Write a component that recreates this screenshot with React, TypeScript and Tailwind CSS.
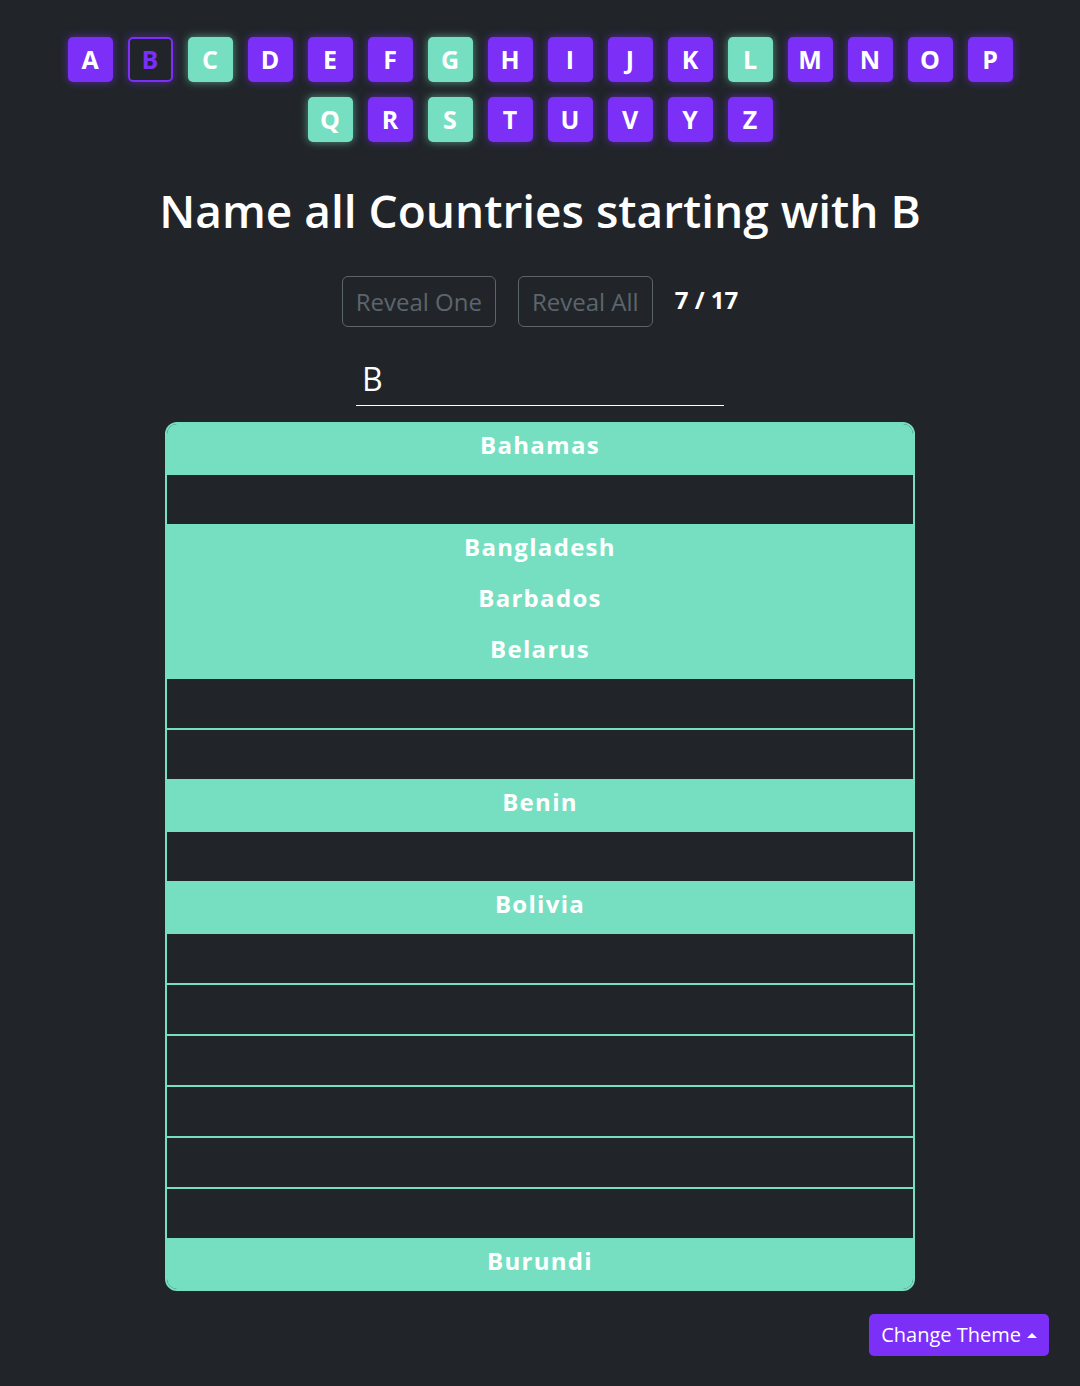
import { useState } from 'react'

const LETTERS = ['A', 'B', 'C', 'D', 'E', 'F', 'G', 'H', 'I', 'J', 'K', 'L', 'M', 'N', 'O', 'P', 'Q', 'R', 'S', 'T', 'U', 'V', 'Y', 'Z']
const DONE = ['C', 'G', 'L', 'Q', 'S']

const ROWS: (string | null)[] = [
  'Bahamas', null, 'Bangladesh', 'Barbados', 'Belarus', null, null, 'Benin', null, 'Bolivia',
  null, null, null, null, null, null, 'Burundi',
]

export default function App() {
  const [guess, setGuess] = useState('B')
  const current = 'B'
  const found = ROWS.filter(Boolean).length

  return (
    <div className="min-h-[1386px] bg-[#212529] text-white font-['Open_Sans','Noto_Sans',sans-serif]">
      {/* letter picker */}
      <div className="pt-[37px] mx-auto max-w-[960px] flex flex-wrap justify-center gap-[15px]">
        {LETTERS.map(l => {
          if (l === current) {
            return (
              <button key={l} className="w-[45px] h-[45px] rounded-[5px] border-2 border-[#7b2ff7] text-[#7b2ff7] text-[25px] font-bold leading-none shadow-[0_0_8px_rgba(123,47,247,0.55)]">
                {l}
              </button>
            )
          }
          const done = DONE.includes(l)
          return (
            <button
              key={l}
              className={`w-[45px] h-[45px] rounded-[5px] text-white text-[25px] font-bold leading-none ${done ? 'bg-[#77dfc1] shadow-[0_0_8px_rgba(119,223,193,0.6)]' : 'bg-[#7b2ff7] shadow-[0_0_8px_rgba(123,47,247,0.6)]'}`}
            >
              {l}
            </button>
          )
        })}
      </div>

      <h1 className="mt-[41px] text-center text-[46px] font-semibold leading-[1.2]">
        Name all Countries starting with {current}
      </h1>

      <div className="mt-[38px] flex justify-center items-start gap-[22px]">
        <button disabled className="h-[51px] px-[13px] rounded-[6px] border border-[#6c757d] text-[#6c757d] text-[24px] opacity-80">
          Reveal One
        </button>
        <button disabled className="h-[51px] px-[13px] rounded-[6px] border border-[#6c757d] text-[#6c757d] text-[24px] opacity-80">
          Reveal All
        </button>
        <span className="mt-[6px] text-[24px] font-bold">{found} / {ROWS.length}</span>
      </div>

      <div className="mt-[24px] flex justify-center">
        <input
          value={guess}
          onChange={e => setGuess(e.target.value)}
          className="w-[368px] h-[55px] bg-transparent border-b border-white px-[6px] text-[32px] text-white outline-none"
        />
      </div>

      {/* answer list */}
      <div className="mt-[16px] mx-auto w-[750px] border-2 border-[#77dfc1] rounded-xl overflow-hidden">
        {ROWS.map((name, i) => (
          <div
            key={i}
            className={`flex items-center justify-center pb-[8px] ${i === 0 ? 'h-[49px]' : 'h-[51px] border-t-2 border-[#77dfc1]'} ${name ? 'bg-[#77dfc1]' : ''}`}
          >
            {name && <span className="text-[24px] font-bold tracking-[1.3px]">{name}</span>}
          </div>
        ))}
      </div>

      <button className="fixed right-[31px] bottom-[30px] h-[42px] px-[12px] rounded-[5px] bg-[#7b2ff7] text-[20px] flex items-center gap-[6px]">
        Change Theme
        <span className="inline-block w-0 h-0 border-x-[5px] border-x-transparent border-b-[5px] border-b-white" />
      </button>
    </div>
  )
}
